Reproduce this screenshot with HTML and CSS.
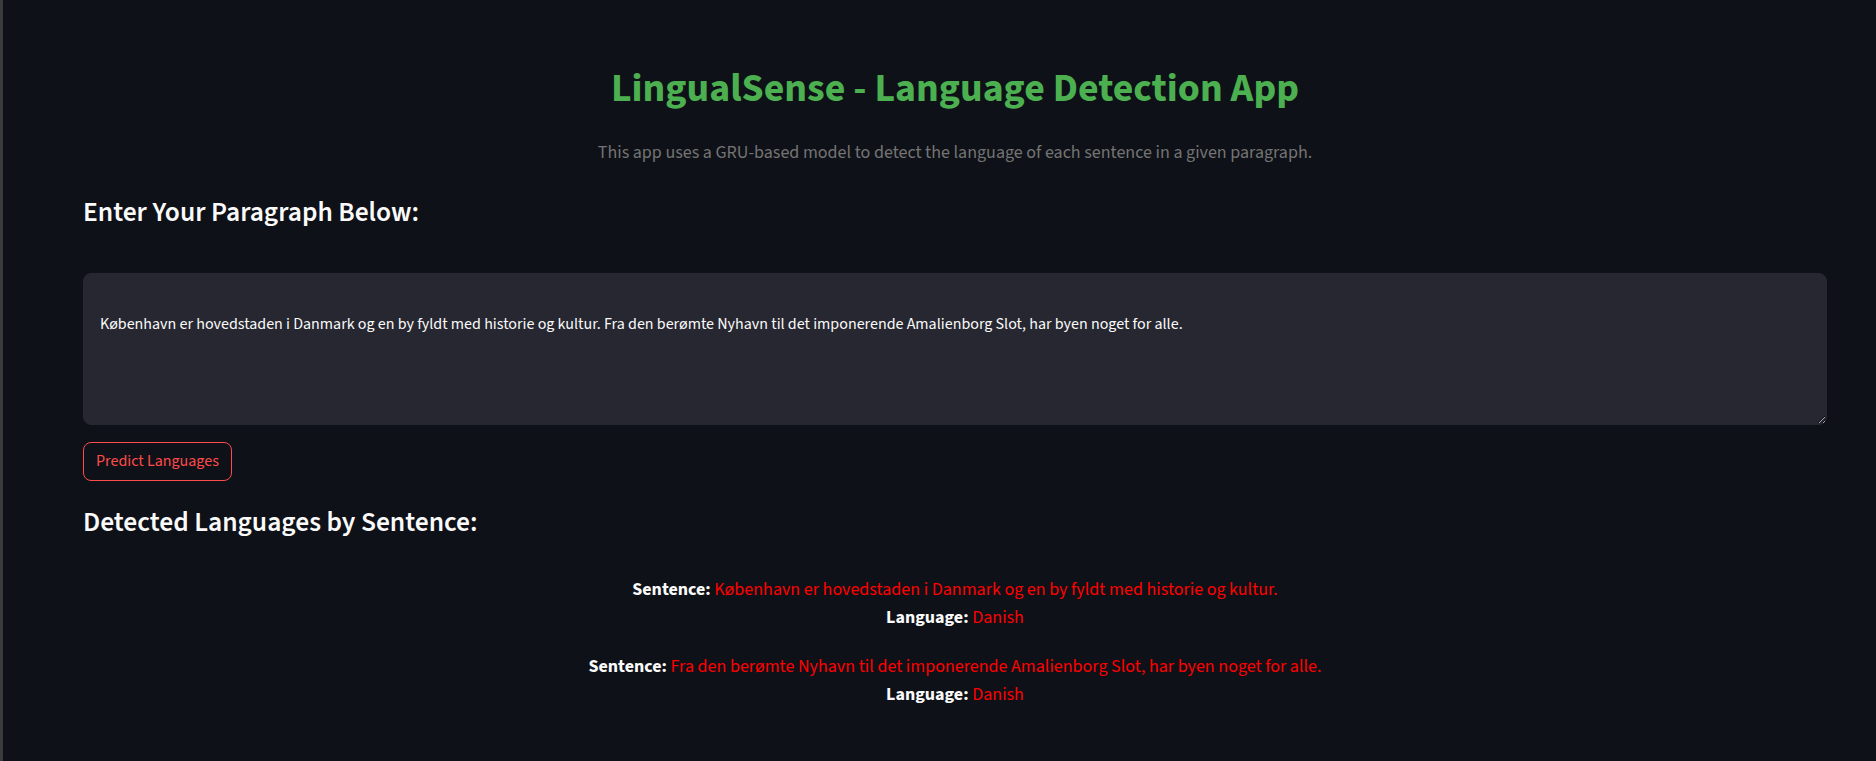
FILE: index.html
```html
<!DOCTYPE html>
<html lang="en">
<head>
<meta charset="utf-8">
<title>LingualSense - Language Detection App</title>
<link rel="stylesheet" href="styles.css">
</head>
<body>
<div class="app">
  <main class="main">
    <h1 class="title">LingualSense - Language Detection App</h1>
    <p class="subtitle">This app uses a GRU-based model to detect the language of each sentence in a given paragraph.</p>
    <h3 class="heading heading-input">Enter Your Paragraph Below:</h3>
    <textarea class="paragraph" aria-label="Paragraph">København er hovedstaden i Danmark og en by fyldt med historie og kultur. Fra den berømte Nyhavn til det imponerende Amalienborg Slot, har byen noget for alle.</textarea>
    <div class="actions">
      <button class="btn" type="button">Predict Languages</button>
    </div>
    <h3 class="heading heading-results">Detected Languages by Sentence:</h3>
    <div class="results">
      <p class="result">
        <span class="line"><b class="label">Sentence:</b> <span class="value">København er hovedstaden i Danmark og en by fyldt med historie og kultur.</span></span>
        <span class="line"><b class="label">Language:</b> <span class="value">Danish</span></span>
      </p>
      <p class="result">
        <span class="line"><b class="label">Sentence:</b> <span class="value">Fra den berømte Nyhavn til det imponerende Amalienborg Slot, har byen noget for alle.</span></span>
        <span class="line"><b class="label">Language:</b> <span class="value">Danish</span></span>
      </p>
    </div>
  </main>
</div>
</body>
</html>
```
FILE: styles.css
```css
html, body {
  margin: 0;
  padding: 0;
  background: #0e1117;
}

body {
  font-family: "Source Sans 3", "Source Sans Pro", "Lato", "Liberation Sans", sans-serif;
  color: #fafafa;
  color-scheme: dark;
}

.app {
  min-height: 100vh;
  box-sizing: border-box;
  border-left: 3px solid #3a3b3d;
  padding: 0 49px 0 80px;
}

.main {
  display: flex;
  flex-direction: column;
  align-items: stretch;
}

.title {
  margin: 63px 0 0;
  font-size: 39.8px;
  line-height: 52px;
  font-weight: 700;
  color: #4caf50;
  text-align: center;
}

.subtitle {
  margin: 24px 0 0;
  font-size: 18px;
  line-height: 28px;
  color: #747474;
  text-align: center;
}

.heading {
  margin: 0;
  font-size: 27.5px;
  line-height: 36px;
  font-weight: 600;
  color: #fafafa;
}

.heading-input {
  margin-top: 28px;
}

.paragraph {
  display: block;
  margin: 42px 0 0;
  box-sizing: border-box;
  width: 100%;
  height: 152px;
  padding: 38px 16px 16px;
  border: 1px solid #262730;
  border-radius: 8px;
  background: #262730;
  color: #fafafa;
  font-family: inherit;
  font-size: 16px;
  line-height: 25.6px;
  resize: vertical;
  outline: none;
}

.actions {
  display: flex;
  margin-top: 17px;
}

.btn {
  box-sizing: border-box;
  height: 39px;
  padding: 0 12px;
  border: 1px solid #ff4b4b;
  border-radius: 8px;
  background: transparent;
  color: #ff4b4b;
  font-family: inherit;
  font-size: 16px;
  line-height: 37px;
  cursor: pointer;
}

.heading-results {
  margin-top: 24px;
}

.results {
  display: flex;
  flex-direction: column;
  gap: 21px;
  margin-top: 35px;
}

.result {
  margin: 0;
  display: flex;
  flex-direction: column;
  align-items: center;
  font-size: 18px;
  line-height: 28px;
  text-align: center;
}

.label {
  font-weight: 700;
  color: #fafafa;
}

.value {
  color: #ff0000;
}
```
